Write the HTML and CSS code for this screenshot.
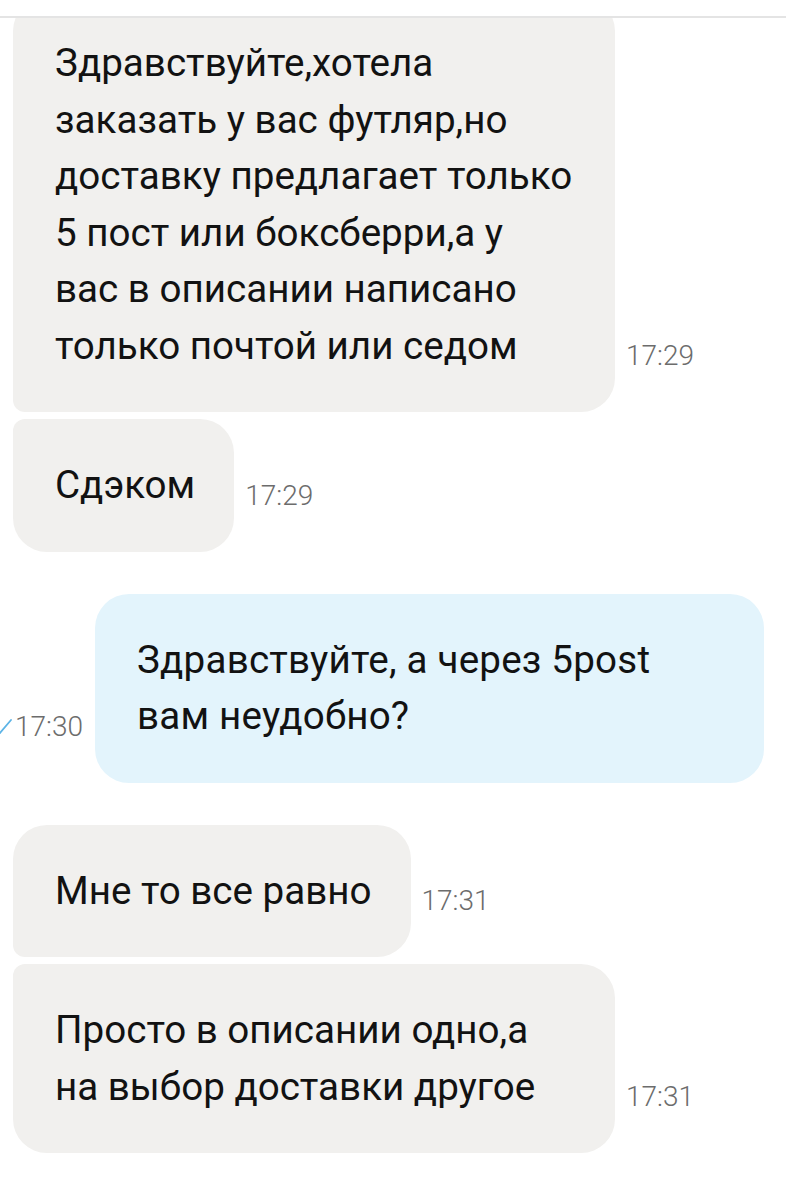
FILE: index.html
```html
<!DOCTYPE html>
<html lang="ru">
<head>
  <meta charset="UTF-8">
  <title>Чат</title>
  <link rel="stylesheet" href="styles.css">
</head>
<body>

<div class="topbar"></div>

<div class="chat">
  <div class="list">

    <!-- входящие -->
    <div class="row in">
      <div class="bubble first wide">Здравствуйте,хотела<br>заказать у вас футляр,но<br>доставку предлагает только<br>5 пост или боксберри,а у<br>вас в описании написано<br>только почтой или седом</div>
      <span class="time">17:29</span>
    </div>
    <div class="row in">
      <div class="bubble last">Сдэком</div>
      <span class="time">17:29</span>
    </div>

    <!-- исходящее -->
    <div class="row out">
      <span class="meta">
        <svg class="check" width="12" height="18" viewBox="0 0 12 18">
          <path d="M-4 12 L0 16 L11 3" fill="none" stroke="#5db4e6" stroke-width="1.8" stroke-linecap="round" stroke-linejoin="round"/>
        </svg>
        <span class="time">17:30</span>
      </span>
      <div class="bubble mine">Здравствуйте, а через 5post<br>вам неудобно?</div>
    </div>

    <div class="row in">
      <div class="bubble first">Мне то все равно</div>
      <span class="time">17:31</span>
    </div>
    <div class="row in">
      <div class="bubble last wide">Просто в описании одно,а<br>на выбор доставки другое</div>
      <span class="time">17:31</span>
    </div>

  </div>
</div>

</body>
</html>
```

FILE: styles.css
```css
body {
  margin: 0;
  background: #fff;
  font-family: Roboto, 'Noto Sans', sans-serif;
  color: #121212;
}
.topbar {
  height: 16px;
  border-bottom: 2px solid #e4e4e4;
}
.chat {
  height: 1182px;
  overflow: hidden;
}
.list {
  margin-top: -21px;
  display: flex;
  flex-direction: column;
}
.row {
  display: flex;
  align-items: flex-end;
}
.row.in {
  padding-left: 13px;
  margin-bottom: 7px;
}
.row.in + .row.out,
.row.out + .row.in {
  margin-top: 35px;
}
.row.out {
  justify-content: flex-end;
  padding-right: 22px;
  margin-bottom: 7px;
}
.bubble {
  font-size: 38.6px;
  line-height: 56.5px;
  padding: 38px 39px 38px 42px;
  border-radius: 34px;
  background: #f1f0ee;
  white-space: nowrap;
}
.bubble.wide {
  width: 602px;
  box-sizing: border-box;
}
.bubble.first {
  border-bottom-left-radius: 12px;
}
.bubble.last {
  border-top-left-radius: 12px;
}
.bubble.mine {
  background: #e3f4fc;
  width: 669px;
  box-sizing: border-box;
  letter-spacing: 0.2px;
}
.time {
  font-size: 28px;
  line-height: 28px;
  font-weight: 300;
  color: #6c6c6c;
  margin: 0 0 42px 11px;
  white-space: nowrap;
}
.meta {
  display: flex;
  align-items: flex-end;
  margin: 0 12px 42px 0;
}
.meta .time {
  margin: 0;
}
.check {
  margin: 0 3px 6px 0;
}
```
